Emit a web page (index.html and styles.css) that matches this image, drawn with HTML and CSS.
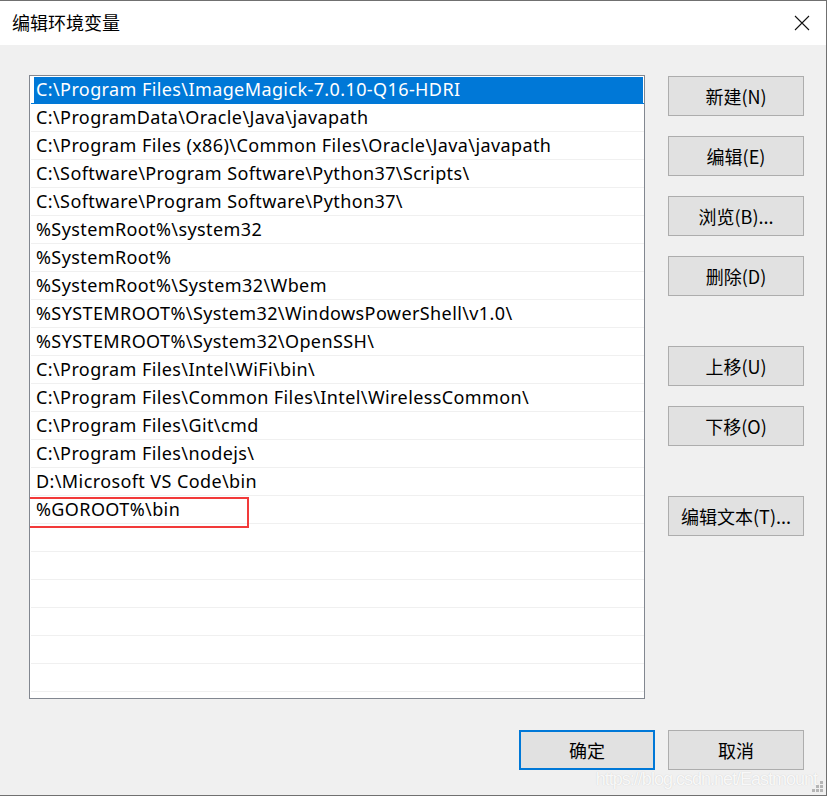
FILE: index.html
```html
<!DOCTYPE html>
<html lang="zh-CN">
<head>
    <meta charset="UTF-8">
    <title>编辑环境变量</title>
    <link rel="stylesheet" href="styles.css">
</head>
<body>
    <div class="dialog">
        <div class="titlebar">
            <span class="title">编辑环境变量</span>
            <span class="close">
                <svg width="16" height="16" viewBox="0 0 16 16">
                    <path d="M1 1 L15 15 M15 1 L1 15" stroke="#111" stroke-width="1.1" fill="none"/>
                </svg>
            </span>
        </div>

        <div class="content">
            <div class="main">
                <div class="path-list">
                    <div class="row selected">C:\Program Files\ImageMagick-7.0.10-Q16-HDRI</div>
                    <div class="row">C:\ProgramData\Oracle\Java\javapath</div>
                    <div class="row">C:\Program Files (x86)\Common Files\Oracle\Java\javapath</div>
                    <div class="row">C:\Software\Program Software\Python37\Scripts\</div>
                    <div class="row">C:\Software\Program Software\Python37\</div>
                    <div class="row">%SystemRoot%\system32</div>
                    <div class="row">%SystemRoot%</div>
                    <div class="row">%SystemRoot%\System32\Wbem</div>
                    <div class="row">%SYSTEMROOT%\System32\WindowsPowerShell\v1.0\</div>
                    <div class="row">%SYSTEMROOT%\System32\OpenSSH\</div>
                    <div class="row">C:\Program Files\Intel\WiFi\bin\</div>
                    <div class="row">C:\Program Files\Common Files\Intel\WirelessCommon\</div>
                    <div class="row">C:\Program Files\Git\cmd</div>
                    <div class="row">C:\Program Files\nodejs\</div>
                    <div class="row">D:\Microsoft VS Code\bin</div>
                    <div class="row marked">%GOROOT%\bin<span class="mark"></span></div>
                    <div class="row"></div>
                    <div class="row"></div>
                    <div class="row"></div>
                    <div class="row"></div>
                    <div class="row"></div>
                    <div class="row"></div>
                </div>

                <div class="side-buttons">
                    <button class="btn">新建(N)</button>
                    <button class="btn">编辑(E)</button>
                    <button class="btn">浏览(B)...</button>
                    <button class="btn">删除(D)</button>
                    <button class="btn group-start">上移(U)</button>
                    <button class="btn">下移(O)</button>
                    <button class="btn group-start">编辑文本(T)...</button>
                </div>
            </div>

            <div class="footer">
                <button class="btn default">确定</button>
                <button class="btn">取消</button>
            </div>
        </div>

        <div class="watermark">https://blog.csdn.net/Eastmount</div>
        <div class="grip">
            <i style="right:3px;bottom:3px"></i>
            <i style="right:7px;bottom:3px"></i>
            <i style="right:11px;bottom:3px"></i>
            <i style="right:3px;bottom:7px"></i>
            <i style="right:7px;bottom:7px"></i>
            <i style="right:3px;bottom:11px"></i>
        </div>
    </div>
</body>
</html>
```

FILE: styles.css
```css
html, body {
    margin: 0;
    padding: 0;
}

body {
    font-family: "Noto Sans", "Noto Sans CJK SC", sans-serif;
    background-color: #f0f0f0;
    color: #000;
}

.dialog {
    position: relative;
    width: 827px;
    height: 796px;
    box-sizing: border-box;
    border-top: 1px solid #707070;
    border-right: 1px solid #707070;
    border-bottom: 1px solid #707070;
    background-color: #f0f0f0;
    overflow: hidden;
}

.titlebar {
    height: 44px;
    background-color: #fff;
    display: flex;
    align-items: center;
    justify-content: space-between;
}

.title {
    padding-left: 12px;
    font-family: "Noto Sans CJK SC", sans-serif;
    font-size: 18px;
    margin-top: -2px;
}

.close {
    width: 46px;
    height: 44px;
    display: flex;
    align-items: center;
    justify-content: center;
    margin-right: 1px;
}

.content {
    padding: 30px 22px 0 29px;
}

.main {
    display: flex;
    gap: 23px;
}

.path-list {
    width: 616px;
    height: 624px;
    box-sizing: border-box;
    border: 1px solid #828790;
    background-color: #fff;
    padding-left: 1px;
    overflow: hidden;
}

.row {
    position: relative;
    height: 28px;
    box-sizing: border-box;
    border-bottom: 1px solid #f0f0f0;
    padding-left: 5px;
    font-size: 18px;
    letter-spacing: 0.4px;
    line-height: 27px;
    white-space: nowrap;
}

.row.selected {
    background-color: #0078d7;
    border-bottom-color: #0078d7;
    color: #fff;
    box-shadow: inset 3px 1px 0 #fff, inset -1px 0 0 #fff;
}

/* red annotation box around the new entry */
.mark {
    position: absolute;
    left: -3px;
    top: 1px;
    width: 221px;
    height: 31px;
    box-sizing: border-box;
    border: 2px solid #f23a3a;
}

.side-buttons {
    display: flex;
    flex-direction: column;
    gap: 20px;
    padding-top: 1px;
}

.btn {
    width: 136px;
    height: 40px;
    box-sizing: border-box;
    border: 1px solid #adadad;
    background-color: #e1e1e1;
    font-family: "Noto Sans CJK SC", sans-serif;
    font-size: 18px;
    color: #000;
    padding: 0;
}

.btn.group-start {
    margin-top: 30px;
}

.btn.default {
    border: 2px solid #0078d7;
}

.footer {
    display: flex;
    justify-content: flex-end;
    gap: 13px;
    margin-top: 31px;
}

.watermark {
    position: absolute;
    right: 9px;
    bottom: 5px;
    font-family: "Liberation Sans", Arial, sans-serif;
    font-size: 18px;
    letter-spacing: -1px;
    color: rgba(255, 255, 255, 0.9);
    text-shadow: 0 0 1px #c4c4c4;
}

.grip i {
    position: absolute;
    width: 3px;
    height: 3px;
    background-color: #b5b5b5;
}
```
